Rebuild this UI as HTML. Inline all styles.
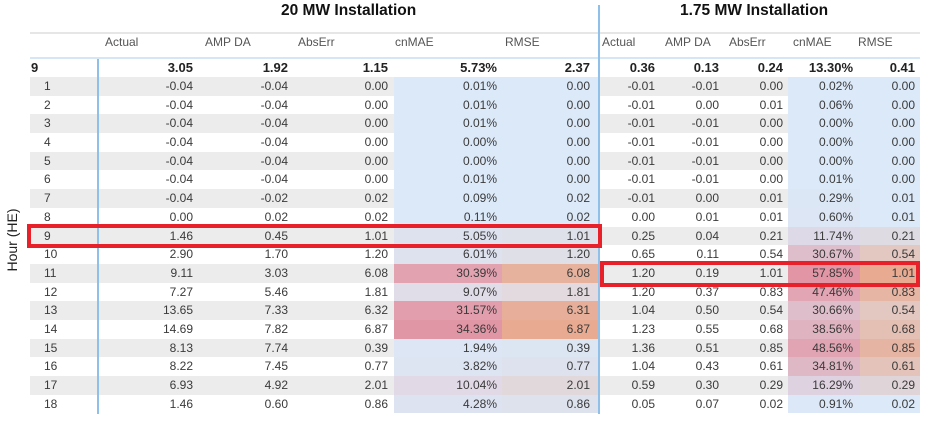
<!DOCTYPE html>
<html><head><meta charset="utf-8"><style>
body{margin:0;width:936px;height:425px;background:#fff;position:relative;overflow:hidden;font-family:"Liberation Sans",Arial,sans-serif;color:#3a3a3a}
.t{position:absolute;top:2px;font-size:15.5px;font-weight:bold;color:#111}
.r{position:absolute;left:0;width:936px;height:18.7px;line-height:18.7px;font-size:12px}
.r div{position:absolute;top:0;height:100%;text-align:right;box-sizing:border-box}
.g .h,.g .a,.g .b,.g .c,.g .a2,.g .b2,.g .c2{background:#ececec}
.h{left:30px;width:68px;text-align:left!important;padding-left:14px}
.a{left:98px;width:97px;padding-right:2px}
.b{left:195px;width:95px;padding-right:2px}
.c{left:290px;width:104px;padding-right:6px}
.d{left:394px;width:108px;padding-right:5px;background:#dce9f8}
.e{left:502px;width:96px;padding-right:8px;background:#dce9f8}
.a2{left:600px;width:60px;padding-right:5px}
.b2{left:660px;width:62px;padding-right:3px}
.c2{left:722px;width:66px;padding-right:5px}
.d2{left:788px;width:72px;padding-right:7px;background:#dce9f8}
.e2{left:860px;width:60px;padding-right:5px;background:#dce9f8}
.hd div{color:#555;text-align:left!important}
.tot{font-weight:bold;font-size:13px;color:#222}
.box{position:absolute;border:4px solid #e8202a;box-sizing:border-box}
</style></head><body>
<div class="t" style="left:281px">20 MW Installation</div>
<div class="t" style="left:680px">1.75 MW Installation</div>
<div style="position:absolute;left:30px;top:32px;width:890px;height:2px;background:#e6e6e6"></div>
<div style="position:absolute;left:30px;top:57px;width:890px;height:2px;background:#d5e6f5"></div>
<div style="position:absolute;left:-28px;top:232px;width:80px;transform:rotate(-90deg);font-size:14px;color:#222;text-align:center">Hour (HE)</div>
<div class="r hd" style="top:33px;height:20px"><div style="left:105px">Actual</div><div style="left:205px">AMP DA</div><div style="left:298px">AbsErr</div><div style="left:395px">cnMAE</div><div style="left:505px">RMSE</div><div style="left:602px">Actual</div><div style="left:665px">AMP DA</div><div style="left:729px">AbsErr</div><div style="left:793px">cnMAE</div><div style="left:858px">RMSE</div></div>
<div class="r tot" style="top:59px"><div class="h" style="padding-left:1px">9</div><div class="a">3.05</div><div class="b">1.92</div><div class="c">1.15</div><div class="d" style="background:#fff">5.73%</div><div class="e" style="background:#fff">2.37</div><div class="a2">0.36</div><div class="b2">0.13</div><div class="c2">0.24</div><div class="d2" style="background:#fff">13.30%</div><div class="e2" style="background:#fff">0.41</div></div>
<div style="position:absolute;top:77px;left:0">
<div class="r g" style="position:relative"><div class="h">1</div><div class="a">-0.04</div><div class="b">-0.04</div><div class="c">0.00</div><div class="d">0.01%</div><div class="e">0.00</div><div class="a2">-0.01</div><div class="b2">-0.01</div><div class="c2">0.00</div><div class="d2">0.02%</div><div class="e2">0.00</div></div>
<div class="r" style="position:relative"><div class="h">2</div><div class="a">-0.04</div><div class="b">-0.04</div><div class="c">0.00</div><div class="d">0.01%</div><div class="e">0.00</div><div class="a2">-0.01</div><div class="b2">0.00</div><div class="c2">0.01</div><div class="d2">0.06%</div><div class="e2">0.00</div></div>
<div class="r g" style="position:relative"><div class="h">3</div><div class="a">-0.04</div><div class="b">-0.04</div><div class="c">0.00</div><div class="d">0.01%</div><div class="e">0.00</div><div class="a2">-0.01</div><div class="b2">-0.01</div><div class="c2">0.00</div><div class="d2">0.00%</div><div class="e2">0.00</div></div>
<div class="r" style="position:relative"><div class="h">4</div><div class="a">-0.04</div><div class="b">-0.04</div><div class="c">0.00</div><div class="d">0.00%</div><div class="e">0.00</div><div class="a2">-0.01</div><div class="b2">-0.01</div><div class="c2">0.00</div><div class="d2">0.00%</div><div class="e2">0.00</div></div>
<div class="r g" style="position:relative"><div class="h">5</div><div class="a">-0.04</div><div class="b">-0.04</div><div class="c">0.00</div><div class="d">0.00%</div><div class="e">0.00</div><div class="a2">-0.01</div><div class="b2">-0.01</div><div class="c2">0.00</div><div class="d2">0.00%</div><div class="e2">0.00</div></div>
<div class="r" style="position:relative"><div class="h">6</div><div class="a">-0.04</div><div class="b">-0.04</div><div class="c">0.00</div><div class="d">0.01%</div><div class="e">0.00</div><div class="a2">-0.01</div><div class="b2">-0.01</div><div class="c2">0.00</div><div class="d2">0.01%</div><div class="e2">0.00</div></div>
<div class="r g" style="position:relative"><div class="h">7</div><div class="a">-0.04</div><div class="b">-0.02</div><div class="c">0.02</div><div class="d">0.09%</div><div class="e">0.02</div><div class="a2">-0.01</div><div class="b2">0.00</div><div class="c2">0.01</div><div class="d2" style="background:#dce7f6">0.29%</div><div class="e2">0.01</div></div>
<div class="r" style="position:relative"><div class="h">8</div><div class="a">0.00</div><div class="b">0.02</div><div class="c">0.02</div><div class="d">0.11%</div><div class="e">0.02</div><div class="a2">0.00</div><div class="b2">0.01</div><div class="c2">0.01</div><div class="d2" style="background:#dce6f5">0.60%</div><div class="e2">0.01</div></div>
<div class="r g" style="position:relative"><div class="h">9</div><div class="a">1.46</div><div class="b">0.45</div><div class="c">1.01</div><div class="d" style="background:#dee2ef">5.05%</div><div class="e" style="background:#dee1ea">1.01</div><div class="a2">0.25</div><div class="b2">0.04</div><div class="c2">0.21</div><div class="d2" style="background:#ddd9e7">11.74%</div><div class="e2" style="background:#dedce2">0.21</div></div>
<div class="r" style="position:relative"><div class="h">10</div><div class="a">2.90</div><div class="b">1.70</div><div class="c">1.20</div><div class="d" style="background:#dee1ee">6.01%</div><div class="e" style="background:#dedfe7">1.20</div><div class="a2">0.65</div><div class="b2">0.11</div><div class="c2">0.54</div><div class="d2" style="background:#dfbecb">30.67%</div><div class="e2" style="background:#e2c8c1">0.54</div></div>
<div class="r g" style="position:relative"><div class="h">11</div><div class="a">9.11</div><div class="b">3.03</div><div class="c">6.08</div><div class="d" style="background:#e2a2b0">30.39%</div><div class="e" style="background:#e7b29d">6.08</div><div class="a2">1.20</div><div class="b2">0.19</div><div class="c2">1.01</div><div class="d2" style="background:#e296a5">57.85%</div><div class="e2" style="background:#e8aa91">1.01</div></div>
<div class="r" style="position:relative"><div class="h">12</div><div class="a">7.27</div><div class="b">5.46</div><div class="c">1.81</div><div class="d" style="background:#e0dce8">9.07%</div><div class="e" style="background:#e2dade">1.81</div><div class="a2">1.20</div><div class="b2">0.37</div><div class="c2">0.83</div><div class="d2" style="background:#e1a5b4">47.46%</div><div class="e2" style="background:#e6b5a4">0.83</div></div>
<div class="r g" style="position:relative"><div class="h">13</div><div class="a">13.65</div><div class="b">7.33</div><div class="c">6.32</div><div class="d" style="background:#e29eac">31.57%</div><div class="e" style="background:#e7af99">6.31</div><div class="a2">1.04</div><div class="b2">0.50</div><div class="c2">0.54</div><div class="d2" style="background:#dfbecb">30.66%</div><div class="e2" style="background:#e2c8c1">0.54</div></div>
<div class="r" style="position:relative"><div class="h">14</div><div class="a">14.69</div><div class="b">7.82</div><div class="c">6.87</div><div class="d" style="background:#e196a6">34.36%</div><div class="e" style="background:#e8aa91">6.87</div><div class="a2">1.23</div><div class="b2">0.55</div><div class="c2">0.68</div><div class="d2" style="background:#e0b3c0">38.56%</div><div class="e2" style="background:#e4bfb3">0.68</div></div>
<div class="r g" style="position:relative"><div class="h">15</div><div class="a">8.13</div><div class="b">7.74</div><div class="c">0.39</div><div class="d" style="background:#dce6f5">1.94%</div><div class="e" style="background:#dce5f2">0.39</div><div class="a2">1.36</div><div class="b2">0.51</div><div class="c2">0.85</div><div class="d2" style="background:#e1a4b3">48.56%</div><div class="e2" style="background:#e6b4a2">0.85</div></div>
<div class="r" style="position:relative"><div class="h">16</div><div class="a">8.22</div><div class="b">7.45</div><div class="c">0.77</div><div class="d" style="background:#dde4f2">3.82%</div><div class="e" style="background:#dde2ee">0.77</div><div class="a2">1.04</div><div class="b2">0.43</div><div class="c2">0.61</div><div class="d2" style="background:#dfb8c6">34.81%</div><div class="e2" style="background:#e3c3ba">0.61</div></div>
<div class="r g" style="position:relative"><div class="h">17</div><div class="a">6.93</div><div class="b">4.92</div><div class="c">2.01</div><div class="d" style="background:#e1dae6">10.04%</div><div class="e" style="background:#e1d8dc">2.01</div><div class="a2">0.59</div><div class="b2">0.30</div><div class="c2">0.29</div><div class="d2" style="background:#ded2e1">16.29%</div><div class="e2" style="background:#dfd5d8">0.29</div></div>
<div class="r" style="position:relative"><div class="h">18</div><div class="a">1.46</div><div class="b">0.60</div><div class="c">0.86</div><div class="d" style="background:#dde3f0">4.28%</div><div class="e" style="background:#dde2ed">0.86</div><div class="a2">0.05</div><div class="b2">0.07</div><div class="c2">0.02</div><div class="d2" style="background:#dce8f7">0.91%</div><div class="e2">0.02</div></div>
</div>
<div style="position:absolute;left:598px;top:5px;width:2px;height:409px;background:#8fc0ea"></div>
<div style="position:absolute;left:97px;top:59px;width:2px;height:355px;background:#8fc0ea"></div>
<div class="box" style="left:27px;top:224px;width:575px;height:24px"></div>
<div class="box" style="left:600px;top:261px;width:320px;height:26px"></div>
</body></html>
